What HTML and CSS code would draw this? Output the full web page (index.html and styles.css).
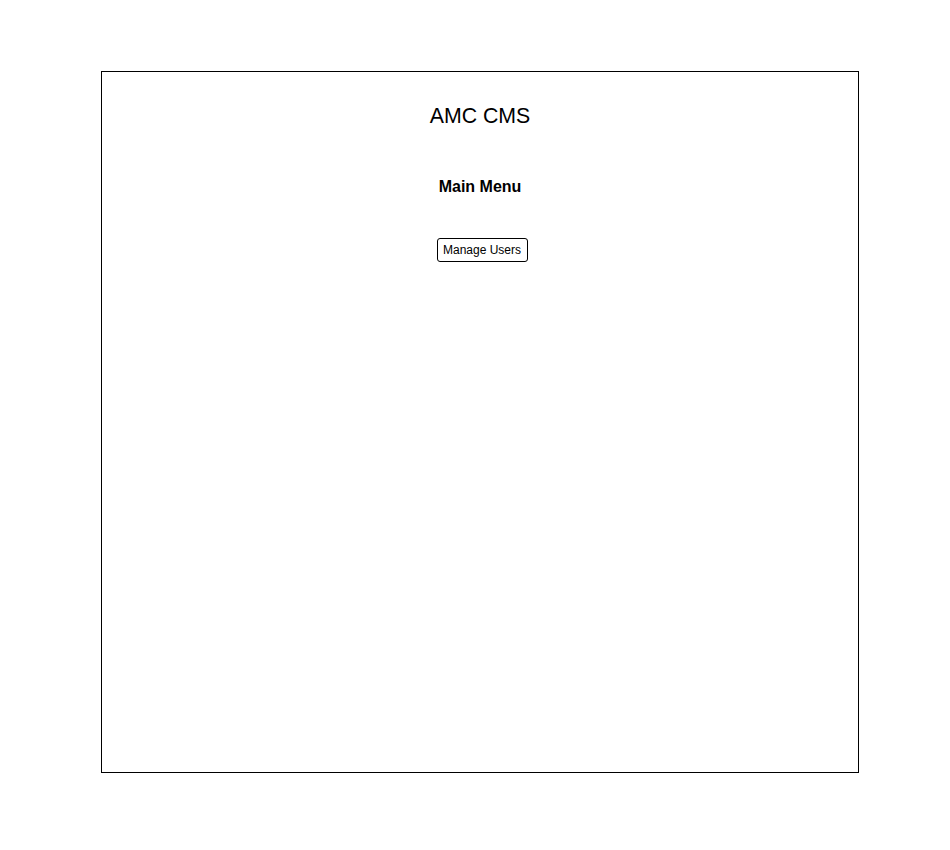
FILE: index.html
```html
<!DOCTYPE html>
<html>
<head>
<meta charset="utf-8">
<title>AMC CMS</title>
<link rel="stylesheet" href="styles.css">
</head>
<body>
<div class="frame">
  <h1 class="title">AMC CMS</h1>
  <h2 class="menu-title">Main Menu</h2>
  <button class="btn" type="button">Manage Users</button>
</div>
</body>
</html>
```
FILE: styles.css
```css
html, body {
  margin: 0;
  padding: 0;
  background: #ffffff;
}
body {
  font-family: "Liberation Sans", Arial, Helvetica, sans-serif;
  color: #000;
}
.frame {
  box-sizing: border-box;
  margin: 71px 0 0 101px;
  width: 758px;
  height: 702px;
  border: 1px solid #000;
  padding-top: 32px;
  display: flex;
  flex-direction: column;
  align-items: center;
}
.title {
  margin: 0;
  font-size: 21.3px;
  line-height: 24px;
  font-weight: normal;
}
.menu-title {
  margin: 49px 0 0 0;
  font-size: 16px;
  line-height: 20px;
  font-weight: bold;
}
.btn {
  box-sizing: border-box;
  margin: 41px 0 0 4px;
  width: 91px;
  height: 24px;
  padding: 0 5px;
  border: 1px solid #000;
  border-radius: 3px;
  background: #fff;
  color: #000;
  font-family: "Liberation Sans", Arial, Helvetica, sans-serif;
  font-size: 12px;
  line-height: 22px;
  text-align: center;
}
```
